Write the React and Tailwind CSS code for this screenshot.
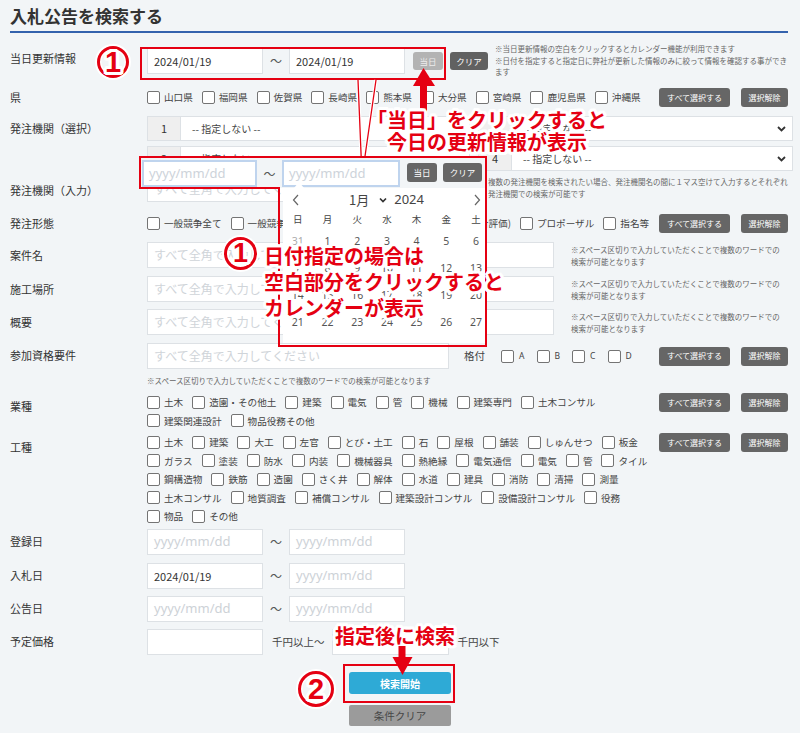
import React from 'react';

// 入札公告検索フォーム + 説明用の注釈（赤枠・吹き出し）

const KEN = ['山口県', '福岡県', '佐賀県', '長崎県', '熊本県', '大分県', '宮崎県', '鹿児島県', '沖縄県'];
const KEITAI = ['一般競争全て', '一般競争(価格)', '指名競争(価格)', '一般競争(総合評価)', 'プロポーザル', '指名等'];
const GYOSHU = ['土木', '造園・その他土', '建築', '電気', '管', '機械', '建築専門', '土木コンサル', '建築関連設計', '物品役務その他'];
const KOSHU = [
  '土木', '建築', '大工', '左官', 'とび・土工', '石', '屋根', '舗装', 'しゅんせつ', '板金',
  'ガラス', '塗装', '防水', '内装', '機械器具', '熱絶縁', '電気通信', '電気', '管', 'タイル',
  '鋼構造物', '鉄筋', '造園', 'さく井', '解体', '水道', '建具', '消防', '清掃', '測量',
  '土木コンサル', '地質調査', '補償コンサル', '建築設計コンサル', '設備設計コンサル', '役務',
  '物品', 'その他',
];
const WEEK = ['日', '月', '火', '水', '木', '金', '土'];
const DAYS = [
  [31, 1, 2, 3, 4, 5, 6],
  [7, 8, 9, 10, 11, 12, 13],
  [14, 15, 16, 17, 18, 19, 20],
  [21, 22, 23, 24, 25, 26, 27],
];

const HALO =
  '[text-shadow:3px_0_#fff,-3px_0_#fff,0_3px_#fff,0_-3px_#fff,2px_2px_#fff,-2px_-2px_#fff,2px_-2px_#fff,-2px_2px_#fff,3px_1.5px_#fff,-3px_1.5px_#fff,3px_-1.5px_#fff,-3px_-1.5px_#fff,1.5px_3px_#fff,-1.5px_3px_#fff,1.5px_-3px_#fff,-1.5px_-3px_#fff]';

function Label({ pt, children }) {
  return <div className={`w-[137px] shrink-0 text-[11px] leading-[16px] text-[#333] ${pt}`}>{children}</div>;
}

function Field({ w, value, jp }) {
  return (
    <div className={`${w} h-[26px] shrink-0 bg-white border border-[#dde1e5] flex items-center pl-[6px] overflow-hidden`}>
      {value ? (
        <span className="text-[11px] text-[#333]">{value}</span>
      ) : jp ? (
        <span className="text-[12px] text-[#cfd4d9] whitespace-nowrap">すべて全角で入力してください</span>
      ) : (
        <span className="text-[13px] text-[#cdd2d7] font-['Noto_Sans',sans-serif]">yyyy/mm/dd</span>
      )}
    </div>
  );
}

function DateRange({ a, b }) {
  return (
    <div className="flex items-center">
      <Field w="w-[116px]" value={a} />
      <span className="w-[26px] text-center text-[12px] text-[#555]">〜</span>
      <Field w="w-[116px]" value={b} />
    </div>
  );
}

function Cb({ label }) {
  return (
    <div className="flex items-center h-[18.5px] mr-[9px] shrink-0">
      <span className="w-[13px] h-[13px] rounded-[2px] border border-[#747474] bg-white shrink-0" />
      <span className="ml-[4px] text-[9.6px] text-[#444] whitespace-nowrap">{label}</span>
    </div>
  );
}

function DarkBtn({ w, children }) {
  return (
    <div className={`${w} h-[19px] rounded-[3px] bg-[#666] text-white text-[8px] flex items-center justify-center whitespace-nowrap`}>
      {children}
    </div>
  );
}

function Btns() {
  return (
    <div className="flex gap-[11px] mr-[5px] shrink-0">
      <DarkBtn w="w-[71px]">すべて選択する</DarkBtn>
      <DarkBtn w="w-[47px]">選択解除</DarkBtn>
    </div>
  );
}

function Chevron() {
  return (
    <svg width="9" height="6" viewBox="0 0 9 6" className="shrink-0">
      <path d="M1 1l3.5 3.5L8 1" fill="none" stroke="#333" strokeWidth="1.8" />
    </svg>
  );
}

function Select({ n }) {
  return (
    <div className="flex h-[25px] bg-white border border-[#dde1e5]">
      <div className="w-[33px] bg-[#efefef] border-r border-[#dde1e5] flex items-center justify-center text-[11px] text-[#333]">
        {n}
      </div>
      <div className="flex-1 flex items-center pl-[11px] pr-[6px] text-[10px] text-[#444]">
        <span className="flex-1">-- 指定しない --</span>
        <Chevron />
      </div>
    </div>
  );
}

function Note({ cls, children }) {
  return <div className={`text-[7.5px] text-[#666] whitespace-nowrap ${cls}`}>{children}</div>;
}

function Circled({ n, cls }) {
  return (
    <div
      className={`absolute rounded-full border-[3px] border-[#e50012] flex items-center justify-center font-bold text-[#e50012] font-['Liberation_Sans',sans-serif] leading-none [box-shadow:0_0_0_2px_#fff,inset_0_0_0_1.5px_#fff] ${HALO} ${cls}`}
    >
      {n}
    </div>
  );
}

function Calendar() {
  return (
    <div className="absolute left-[139px] top-[156px] w-[349px] h-[192px]">
      {/* input band */}
      <div className="absolute left-[1px] top-[1px] w-[347px] h-[31px] bg-[#f2f5f7] flex items-start pl-[2px] pt-[3px]">
        <div className="w-[115px] h-[27px] bg-white border-2 border-[#bfd4ee] flex items-center pl-[5px]">
          <span className="text-[13px] text-[#cdd3da] font-['Noto_Sans',sans-serif]">yyyy/mm/dd</span>
        </div>
        <span className="w-[25px] h-[27px] flex items-center justify-center text-[12px] text-[#555]">〜</span>
        <div className="w-[118px] h-[27px] bg-white border-2 border-[#bfd4ee] flex items-center pl-[5px]">
          <span className="text-[13px] text-[#cdd3da] font-['Noto_Sans',sans-serif]">yyyy/mm/dd</span>
        </div>
        <div className="ml-[7px] mt-[3px] w-[30px] h-[19px] rounded-[3px] bg-[#666] text-white text-[8.5px] flex items-center justify-center">当日</div>
        <div className="ml-[6px] mt-[3px] w-[39px] h-[19px] rounded-[3px] bg-[#666] text-white text-[8.5px] flex items-center justify-center">クリア</div>
      </div>
      {/* calendar body */}
      <div className="absolute left-[144px] top-[32px] w-[202px] h-[155px] bg-white">
        <div className="h-[24px] flex items-center justify-between pl-[9px] pr-[4px]">
          <svg width="7" height="12" viewBox="0 0 7 12"><path d="M6 1L1.5 6 6 11" fill="none" stroke="#666" strokeWidth="1.2" /></svg>
          <div className="flex items-center text-[13px] text-[#444]">
            <span>1月</span>
            <svg width="8" height="6" viewBox="0 0 8 6" className="ml-[10px]"><path d="M1 1.5l3 3 3-3" fill="none" stroke="#333" strokeWidth="1.7" /></svg>
            <span className="ml-[7px] font-['Noto_Sans',sans-serif]">2024</span>
          </div>
          <svg width="7" height="12" viewBox="0 0 7 12"><path d="M1 1l4.5 5L1 11" fill="none" stroke="#666" strokeWidth="1.2" /></svg>
        </div>
        <div className="grid grid-cols-[repeat(7,29.7px)] h-[14px] items-center text-[9.5px] text-[#444]">
          {WEEK.map((d) => (
            <span key={d} className="text-center">{d}</span>
          ))}
        </div>
        <div className="mt-[2.5px]">
          {DAYS.map((row, i) => (
            <div key={i} className="grid grid-cols-[repeat(7,29.7px)] h-[27px] items-center text-[10.5px] text-[#555] font-['Noto_Sans',sans-serif]">
              {row.map((d) => (
                <span key={d} className={`text-center ${d === 31 ? 'text-[#aaa]' : ''}`}>{d}</span>
              ))}
            </div>
          ))}
        </div>
      </div>
      <div className="absolute left-[155px] top-[26px] w-0 h-0 border-x-[5px] border-x-transparent border-b-[6px] border-b-white" />
      <svg className="absolute left-0 top-0" width="349" height="192">
        <path d="M1 1H347V190H140V32H1Z" fill="none" stroke="#e50012" strokeWidth="2" />
      </svg>
    </div>
  );
}

export default function App() {
  return (
    <div className="relative w-[800px] h-[733px] overflow-hidden bg-[#f2f5f7] text-[#333] font-['Noto_Sans_CJK_JP','Noto_Sans',sans-serif]">
      <div className="px-[10px]">
        <h1 className="h-[31px] flex items-center text-[17px] font-bold text-[#333]">入札公告を検索する</h1>
        <div className="w-[778px] h-[2px] bg-[#3462ad]" />
      </div>

      <div className="pl-[10px] pr-[7px]">
        {/* 当日更新情報 */}
        <div className="flex mt-[15px] h-[26px]">
          <Label pt="pt-[2px]">当日更新情報</Label>
          <div className="flex items-start">
            <DateRange a="2024/01/19" b="2024/01/19" />
            <div className="ml-[8px] mt-[4px] w-[30px] h-[18px] rounded-[3px] bg-[#b3b3b3] text-[#ececec] text-[8.5px] flex items-center justify-center">当日</div>
            <div className="ml-[7px] mt-[4px] w-[38px] h-[18px] rounded-[3px] bg-[#616161] text-white text-[8.5px] flex items-center justify-center">クリア</div>
            <Note cls="ml-[7px] -mt-[5px] leading-[11.5px]">
              ※当日更新情報の空白をクリックするとカレンダー機能が利用できます
              <br />
              ※日付を指定すると指定日に弊社が更新した情報のみに絞って情報を確認する事ができ
              <br />
              ます
            </Note>
          </div>
        </div>

        {/* 県 */}
        <div className="flex mt-[14px] h-[19px]">
          <Label pt="pt-[1px]">県</Label>
          <div className="flex-1 flex items-center">
            <div className="flex-1 flex flex-nowrap">
              {KEN.map((k) => (
                <Cb key={k} label={k} />
              ))}
            </div>
            <Btns />
          </div>
        </div>

        {/* 発注機関（選択） */}
        <div className="flex mt-[9px] h-[55px]">
          <Label pt="pt-[4px]">発注機関（選択）</Label>
          <div className="flex-1 grid grid-cols-[323px_1fr] gap-x-[8px] gap-y-[5px]">
            <Select n="1" />
            <Select n="3" />
            <Select n="2" />
            <Select n="4" />
          </div>
        </div>

        {/* 発注機関（入力） */}
        <div className="flex mt-[5px] h-[26px]">
          <Label pt="pt-[6px]">発注機関（入力）</Label>
          <div className="flex items-start">
            <Field w="w-[333px]" value="" jp />
            <Note cls="ml-[8px] leading-[11.5px]">
              複数の発注機関を検索されたい場合、発注機関名の間に１マス空けて入力するとそれぞれ
              <br />
              発注機関での検索が可能です
            </Note>
          </div>
        </div>

        {/* 発注形態 */}
        <div className="flex mt-[12px] h-[19px]">
          <Label pt="pt-[1px]">発注形態</Label>
          <div className="flex-1 flex items-center">
            <div className="flex-1 flex flex-nowrap">
              {KEITAI.map((k) => (
                <Cb key={k} label={k} />
              ))}
            </div>
            <Btns />
          </div>
        </div>

        {[
          ['案件名', 'mt-[9px]'],
          ['施工場所', 'mt-[8px]'],
          ['概要', 'mt-[7px]'],
        ].map(([l, mt]) => (
          <div key={l} className={`flex h-[26px] ${mt}`}>
            <Label pt="pt-[5px]">{l}</Label>
            <div className="flex items-start">
              <Field w="w-[407px]" value="" jp />
              <Note cls="ml-[17px] mt-[2px] leading-[11.5px]">
                ※スペース区切りで入力していただくことで複数のワードでの
                <br />
                検索が可能となります
              </Note>
            </div>
          </div>
        ))}

        {/* 参加資格要件 */}
        <div className="flex mt-[8px] h-[26px]">
          <Label pt="pt-[4px]">参加資格要件</Label>
          <div className="flex-1 flex items-center">
            <Field w="w-[302px]" value="" jp />
            <span className="ml-[15px] text-[10.5px] text-[#444]">格付</span>
            <div className="ml-[16px] flex">
              {['A', 'B', 'C', 'D'].map((g) => (
                <div key={g} className="flex items-center mr-[12px]">
                  <span className="w-[13px] h-[13px] rounded-[2px] border border-[#747474] bg-white" />
                  <span className="ml-[5px] w-[5.5px] text-[8.5px] text-[#444] font-['Noto_Sans',sans-serif]">{g}</span>
                </div>
              ))}
            </div>
            <div className="ml-auto">
              <Btns />
            </div>
          </div>
        </div>
        <Note cls="mt-[6px] pl-[137px] leading-[11px]">
          ※スペース区切りで入力していただくことで複数のワードでの検索が可能となります
        </Note>

        {/* 業種 */}
        <div className="flex mt-[7px] h-[37px]">
          <Label pt="pt-[5px]">業種</Label>
          <div className="flex-1 flex items-start">
            <div className="flex-1 flex flex-wrap">
              {GYOSHU.map((k) => (
                <Cb key={k} label={k} />
              ))}
            </div>
            <Btns />
          </div>
        </div>

        {/* 工種 */}
        <div className="flex mt-[3px] h-[92.5px]">
          <Label pt="pt-[6px]">工種</Label>
          <div className="flex-1 flex items-start">
            <div className="flex-1 flex flex-wrap">
              {KOSHU.map((k, i) => (
                <Cb key={i} label={k} />
              ))}
            </div>
            <Btns />
          </div>
        </div>

        {[
          ['登録日', 'mt-[3.5px]', ''],
          ['入札日', 'mt-[8px]', '2024/01/19'],
          ['公告日', 'mt-[7px]', ''],
        ].map(([l, mt, v]) => (
          <div key={l} className={`flex h-[26px] ${mt}`}>
            <Label pt="pt-[4px]">{l}</Label>
            <DateRange a={v} b="" />
          </div>
        ))}

        {/* 予定価格 */}
        <div className="flex mt-[7px] h-[26px]">
          <Label pt="pt-[4px]">予定価格</Label>
          <div className="flex items-center">
            <div className="w-[116px] h-[26px] bg-white border border-[#dde1e5]" />
            <span className="ml-[9px] text-[10.5px] text-[#444]">千円以上〜</span>
            <div className="ml-[7px] w-[117px] h-[26px] bg-white border border-[#dde1e5]" />
            <span className="ml-[9px] text-[10.5px] text-[#444]">千円以下</span>
          </div>
        </div>
      </div>

      <div className="flex flex-col items-center">
        <div className="mt-[17px] w-[102px] h-[22px] rounded-[3px] bg-[#2eaad6] text-white text-[10px] font-bold flex items-center justify-center">検索開始</div>
        <div className="mt-[11px] w-[102px] h-[21px] rounded-[2px] bg-[#9b9b9b] text-[#474747] text-[10.5px] flex items-center justify-center">条件クリア</div>
      </div>

      {/* ===== annotations ===== */}
      <div className="absolute left-[140px] top-[47px] w-[306px] h-[33px] border-2 border-[#e50012]" />
      <Circled n="1" cls="left-[97px] top-[46px] w-[32px] h-[32px] text-[29px]" />

      <svg className="absolute left-[350px] top-[78px]" width="32" height="102">
        <polyline points="8,2 12,99 26,2" fill="none" stroke="#fff" strokeWidth="3.5" />
        <polyline points="8,2 12,99 26,2" fill="none" stroke="#e50012" strokeWidth="1.3" />
      </svg>

      <Calendar />

      <svg className="absolute left-[410px] top-[66px]" width="28" height="48">
        <polygon points="13.5,2 3,20 25,20" fill="#e50012" />
        <rect x="10" y="19" width="7" height="27" fill="#e50012" />
      </svg>

      <div className={`absolute left-[367px] top-[109px] w-[240px] text-center text-[20px] leading-[21.5px] font-bold text-[#e50012] whitespace-nowrap ${HALO}`}>
        「当日」をクリックすると
        <br />
        今日の更新情報が表示
      </div>

      <Circled n="1" cls="left-[224px] top-[237px] w-[33px] h-[33px] text-[27px]" />
      <div className={`absolute left-[264px] top-[243px] text-[20px] leading-[26px] font-bold text-[#e50012] whitespace-nowrap ${HALO}`}>
        日付指定の場合は
        <br />
        空白部分をクリックすると
        <br />
        カレンダーが表示
      </div>

      <div className={`absolute left-[335px] top-[625px] text-[20px] leading-[22px] font-bold text-[#e50012] whitespace-nowrap ${HALO}`}>
        指定後に検索
      </div>
      <svg className="absolute left-[390px] top-[646px]" width="26" height="32">
        <rect x="8.5" y="0" width="7" height="13" fill="#e50012" />
        <polygon points="2.5,11 22.5,11 12.5,29" fill="#e50012" />
      </svg>
      <div className="absolute left-[343px] top-[664px] w-[112px] h-[39px] border-2 border-[#e50012]" />
      <Circled n="2" cls="left-[298px] top-[671px] w-[36px] h-[36px] text-[29px]" />
    </div>
  );
}
